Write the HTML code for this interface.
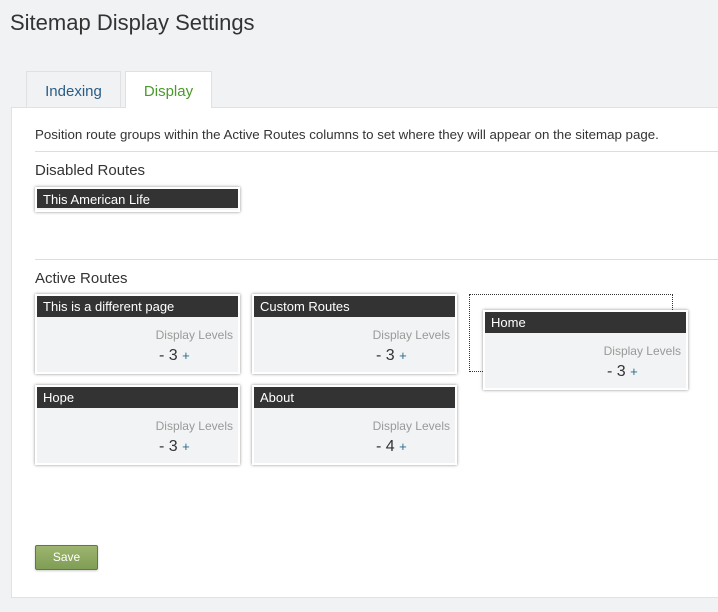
<!DOCTYPE html><html><head><style>
body{margin:0;width:718px;height:612px;background:#f1f2f4;font-family:"Liberation Sans",sans-serif;position:relative;overflow:hidden;color:#333}
.a{position:absolute}
h1{position:absolute;left:10px;top:10px;margin:0;font-weight:normal;font-size:22px;color:#333}
.tab{position:absolute;top:71px;height:36px;border:1px solid #dfe1e3;border-bottom:none;font-size:15px;line-height:40px;text-align:center;box-sizing:border-box}
.panel{position:absolute;left:11px;top:107px;width:720px;height:491px;background:#fff;border:1px solid #dfe1e3;box-sizing:border-box}
.card{position:absolute;width:205px;height:80px;background:#f2f3f4;border:2px solid #fff;box-sizing:border-box;box-shadow:0 0 3px 0 rgba(0,0,0,.45)}
.hd{background:#333;color:#fff;font-size:13px;height:21px;line-height:22px;padding-left:6px}
.dl{position:absolute;right:5px;top:32px;font-size:12px;color:#999}
.nm{position:absolute;left:122px;top:51px;font-size:16px;color:#333}
.nm span{font-size:13px;color:#2a6a8a}
</style></head><body>
<h1>Sitemap Display Settings</h1>
<div class="tab" style="left:26px;width:95px;background:#f1f2f4;color:#2a5c85">Indexing</div>
<div class="panel"></div>
<div class="tab" style="left:125px;width:87px;height:37px;background:#fff;color:#4a9a2a">Display</div>
<div class="a" style="left:35px;top:127px;font-size:13.3px;color:#333">Position route groups within the Active Routes columns to set where they will appear on the sitemap page.</div>
<div class="a" style="left:35px;top:151px;width:683px;border-top:1px solid #ddd"></div>
<div class="a" style="left:35px;top:162px;font-size:15px">Disabled Routes</div>
<div class="card" style="left:35px;top:187px;height:25px"><div class="hd" style="height:19px;line-height:21px">This American Life</div></div>
<div class="a" style="left:35px;top:259px;width:683px;border-top:1px solid #ddd"></div>
<div class="a" style="left:35px;top:270px;font-size:15px">Active Routes</div>
<div class="card" style="left:35px;top:294px"><div class="hd">This is a different page</div><div class="dl">Display Levels</div><div class="nm">- 3 <span>+</span></div></div>
<div class="card" style="left:252px;top:294px"><div class="hd">Custom Routes</div><div class="dl">Display Levels</div><div class="nm">- 3 <span>+</span></div></div>
<div class="a" style="left:469px;top:294px;width:204px;height:78px;border:1px dotted #333;box-sizing:border-box"></div>
<div class="card" style="left:483px;top:310px"><div class="hd">Home</div><div class="dl">Display Levels</div><div class="nm">- 3 <span>+</span></div></div>
<div class="card" style="left:35px;top:385px"><div class="hd">Hope</div><div class="dl">Display Levels</div><div class="nm">- 3 <span>+</span></div></div>
<div class="card" style="left:252px;top:385px"><div class="hd">About</div><div class="dl">Display Levels</div><div class="nm">- 4 <span>+</span></div></div>
<div class="a" style="left:35px;top:545px;width:63px;height:25px;box-sizing:border-box;border:1px solid #5e7a3e;border-radius:2px;background:linear-gradient(#9db56f,#809e55);color:#fff;font-size:12px;line-height:23px;text-align:center;box-shadow:0 1px 2px rgba(0,0,0,.2)">Save</div>
</body></html>
